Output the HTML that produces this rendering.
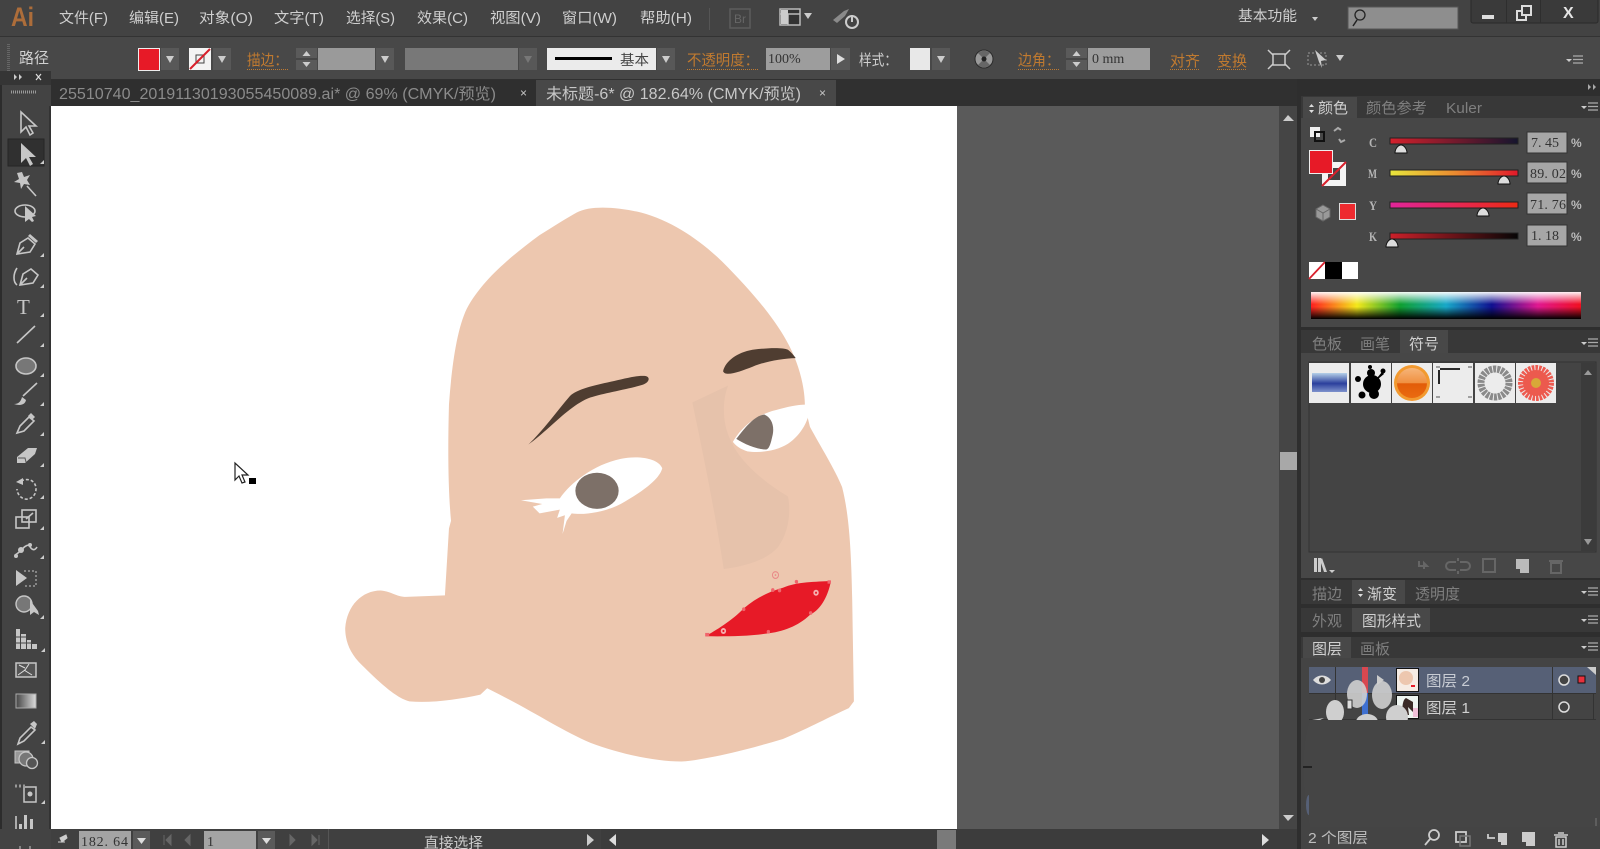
<!DOCTYPE html>
<html lang="zh"><head><meta charset="utf-8"><title>Illustrator</title>
<style>
html,body{margin:0;padding:0;width:1600px;height:849px;overflow:hidden;background:#444}
svg{display:block;filter:blur(.35px)}
text{font-family:"Liberation Sans","Noto Sans CJK SC",sans-serif;fill:#c4c4c4}
.m{font-size:14.5px;fill:#cfcfcf}
.o{font-size:15px;fill:#c07a30}
.t{font-size:15px;fill:#7f7f7f}
.a{font-size:15px;fill:#d0d0d0}
.s{font-family:"Liberation Serif","Noto Sans CJK SC",serif;font-size:14px;fill:#333}
.l{font-family:"Liberation Serif",serif;font-size:13px;font-weight:bold;fill:#b5b5b5}
.ic{fill:none;stroke:#c6c6c6;stroke-width:1.6}
.f{fill:#c6c6c6}
</style></head><body>
<svg xmlns="http://www.w3.org/2000/svg" width="1600" height="849" viewBox="0 0 1600 849">
<defs>
<linearGradient id="gc"><stop offset="0" stop-color="#d5202c"/><stop offset="1" stop-color="#15152e"/></linearGradient>
<linearGradient id="gm"><stop offset="0" stop-color="#e8e63c"/><stop offset=".5" stop-color="#ea8c30"/><stop offset="1" stop-color="#e2182a"/></linearGradient>
<linearGradient id="gy"><stop offset="0" stop-color="#e0259a"/><stop offset="1" stop-color="#ec2a14"/></linearGradient>
<linearGradient id="gk"><stop offset="0" stop-color="#cc202a"/><stop offset="1" stop-color="#060606"/></linearGradient>
<linearGradient id="spec"><stop offset="0" stop-color="#ff2020"/><stop offset=".17" stop-color="#f4e81c"/><stop offset=".33" stop-color="#10a030"/><stop offset=".5" stop-color="#18a8c8"/><stop offset=".67" stop-color="#101090"/><stop offset=".84" stop-color="#e01890"/><stop offset="1" stop-color="#f01020"/></linearGradient>
<linearGradient id="specv" x2="0" y2="1"><stop offset="0" stop-color="#fff" stop-opacity=".95"/><stop offset=".45" stop-color="#fff" stop-opacity="0"/><stop offset=".55" stop-color="#000" stop-opacity="0"/><stop offset="1" stop-color="#000"/></linearGradient>
<linearGradient id="gg"><stop offset="0" stop-color="#444"/><stop offset="1" stop-color="#ddd"/></linearGradient>
<linearGradient id="gb" x2="0" y2="1"><stop offset="0" stop-color="#b5d0e8"/><stop offset=".55" stop-color="#2b3f9c"/><stop offset="1" stop-color="#7e92cc"/></linearGradient>
<linearGradient id="go" x2="0" y2="1"><stop offset="0" stop-color="#f6b57a"/><stop offset=".5" stop-color="#f09040"/><stop offset=".52" stop-color="#e25c08"/><stop offset="1" stop-color="#ea6a10"/></linearGradient>
<g id="dd"><rect x="0" y="0" width="18" height="22" fill="#585858"/><path d="M5 8h8l-4 7z" fill="#ccc"/></g>
<g id="pm"><path d="M0 3h6l-3 3z" fill="#ccc"/><path d="M7 0h10M7 3.500h10M7 7h10" stroke="#aaa" stroke-width="1.300" fill="none"/></g>
<path id="cnr" d="M4 0v-4l-4 4z" fill="#ccc"/>
<g id="spin"><rect width="21" height="22" fill="#5a5a5a"/><path d="M0 11h21" stroke="#333"/><path d="M10.500 3l4 5h-8zM10.500 19l4-5h-8z" fill="#ccc"/></g>
<path id="thumb" d="M-6 4c0-4 3-8 6-8s6 4 6 8z" fill="#ddd" stroke="#111" stroke-width="1"/>
</defs>

<rect width="1600" height="849" fill="#444"/>

<!-- menu bar -->
<rect width="1600" height="36" fill="#434343"/>
<path d="M0 36.500h1600" stroke="#333"/>
<text x="11" y="26" textLength="23" lengthAdjust="spacingAndGlyphs" style="font-size:27px;fill:#ad6d3a;font-weight:bold">Ai</text>
<text class="m" x="59" y="23" textLength="49" lengthAdjust="spacingAndGlyphs">文件(F)</text>
<text class="m" x="129" y="23" textLength="50" lengthAdjust="spacingAndGlyphs">编辑(E)</text>
<text class="m" x="199" y="23" textLength="54" lengthAdjust="spacingAndGlyphs">对象(O)</text>
<text class="m" x="274" y="23" textLength="50" lengthAdjust="spacingAndGlyphs">文字(T)</text>
<text class="m" x="346" y="23" textLength="49" lengthAdjust="spacingAndGlyphs">选择(S)</text>
<text class="m" x="417" y="23" textLength="51" lengthAdjust="spacingAndGlyphs">效果(C)</text>
<text class="m" x="490" y="23" textLength="51" lengthAdjust="spacingAndGlyphs">视图(V)</text>
<text class="m" x="562" y="23" textLength="55" lengthAdjust="spacingAndGlyphs">窗口(W)</text>
<text class="m" x="640" y="23" textLength="52" lengthAdjust="spacingAndGlyphs">帮助(H)</text>
<path d="M709.500 8v22" stroke="#555"/>
<rect x="730" y="9" width="20" height="19" fill="none" stroke="#5c5c5c" stroke-width="1.500"/>
<text x="734" y="23" style="font-size:12px;fill:#666">Br</text>
<rect x="780" y="9" width="20" height="16" fill="#333" stroke="#bbb" stroke-width="1.500"/>
<path d="M780 14h20M788 14v11" stroke="#bbb" stroke-width="1.500"/>
<rect x="781" y="10" width="7" height="14" fill="#ccc"/>
<path d="M804 13h8l-4 6z" fill="#ccc"/>
<path d="M833 20l11-9 5-2-4 7-8 7z" fill="#8a8a8a"/>
<circle cx="852" cy="22" r="6" fill="none" stroke="#ccc" stroke-width="2"/>
<path d="M852 15v7" stroke="#ccc" stroke-width="2"/>
<text class="m" x="1238" y="21" textLength="59" lengthAdjust="spacingAndGlyphs">基本功能</text>
<path d="M1312 17h6l-3 4z" fill="#ccc"/>
<rect x="1348" y="7" width="110" height="22" fill="#8e8e8e" stroke="#555"/>
<circle cx="1360" cy="15" r="5" fill="none" stroke="#222" stroke-width="1.300"/>
<path d="M1357 20l-4 6" stroke="#222" stroke-width="1.500"/>
<rect x="1471" y="-2" width="127" height="25" rx="2" fill="#3a3a3a" stroke="#2a2a2a"/>
<path d="M1506.500 0v23M1540.500 0v23" stroke="#2e2e2e"/>
<rect x="1482" y="15" width="12" height="4" fill="#ddd"/>
<rect x="1517" y="11" width="9" height="9" fill="none" stroke="#ddd" stroke-width="2"/>
<rect x="1522" y="6" width="9" height="9" fill="#3a3a3a" stroke="#ddd" stroke-width="2"/>
<text x="1563" y="18" style="font-size:16px;font-weight:bold;fill:#e4e4e4">X</text>

<!-- control bar -->
<rect y="37" width="1600" height="42" fill="#484848"/>
<path d="M8.500 44v28" stroke="#666" stroke-dasharray="1 1" stroke-width="3"/>
<text class="a" x="19" y="63" textLength="30" lengthAdjust="spacingAndGlyphs">路径</text>
<rect x="138.500" y="48.500" width="21" height="22" fill="#e71a27" stroke="#eee"/>
<use href="#dd" x="161" y="48"/>
<rect x="189" y="48" width="22" height="22" fill="#f4f4f4"/>
<rect x="196" y="55" width="8" height="8" fill="none" stroke="#444"/>
<path d="M190 69l20-20" stroke="#d8202c" stroke-width="2"/>
<use href="#dd" x="213" y="48"/>
<text class="o" x="247" y="65" textLength="41" lengthAdjust="spacingAndGlyphs">描边：</text>
<path d="M247 69.500h41" stroke="#c07a30" stroke-dasharray="1 1"/>
<use href="#spin" x="296" y="48"/>
<rect x="318" y="48" width="57" height="22" fill="#9a9a9a"/>
<use href="#dd" x="376" y="48"/>
<rect x="405" y="48" width="113" height="22" fill="#787878"/>
<rect x="519" y="48" width="18" height="22" fill="#585858"/><path d="M524 56h8l-4 7z" fill="#777"/>
<rect x="547" y="48" width="109" height="22" fill="#ebebeb"/>
<rect x="555" y="57" width="57" height="3" fill="#000"/>
<text class="s" x="620" y="65" textLength="29" lengthAdjust="spacingAndGlyphs" style="font-size:14px;fill:#444">基本</text>
<use href="#dd" x="657" y="48"/>
<text class="o" x="687" y="65" textLength="72" lengthAdjust="spacingAndGlyphs">不透明度：</text>
<path d="M687 69.500h72" stroke="#c07a30" stroke-dasharray="1 1"/>
<rect x="766" y="48" width="64" height="22" fill="#9d9d9d"/>
<text class="s" x="768" y="63">100%</text>
<rect x="831" y="48" width="19" height="22" fill="#585858"/><path d="M837 54l8 5-8 5z" fill="#ddd"/>
<text class="a" x="859" y="65" textLength="38" lengthAdjust="spacingAndGlyphs">样式：</text>
<rect x="910" y="48" width="20" height="22" fill="#e8e8e8"/>
<use href="#dd" x="932" y="48"/>
<circle cx="984" cy="59" r="9" fill="#999" stroke="#2a2a2a"/><path d="M984 59l-6-6a9 9 0 0 1 12 0zM984 59l6 6a9 9 0 0 1-12 0z" fill="#666"/><circle cx="984" cy="59" r="2.500" fill="#222"/>
<text class="o" x="1018" y="65" textLength="42" lengthAdjust="spacingAndGlyphs">边角：</text>
<path d="M1018 69.500h42" stroke="#c07a30" stroke-dasharray="1 1"/>
<use href="#spin" x="1066" y="48"/>
<rect x="1088" y="48" width="62" height="22" fill="#9d9d9d"/>
<text class="s" x="1092" y="63">0 mm</text>
<text class="o" x="1170" y="66" textLength="30" lengthAdjust="spacingAndGlyphs">对齐</text>
<path d="M1170 69.500h30" stroke="#c07a30" stroke-dasharray="1 1"/>
<text class="o" x="1217" y="66" textLength="30" lengthAdjust="spacingAndGlyphs">变换</text>
<path d="M1217 69.500h30" stroke="#c07a30" stroke-dasharray="1 1"/>
<rect x="1273" y="54" width="12" height="11" fill="none" stroke="#ccc" stroke-width="1.500"/>
<path d="M1268 50l5 5M1290 50l-5 5M1268 69l5-5M1290 69l-5-5" stroke="#ccc" stroke-width="1.500"/>
<rect x="1308" y="53" width="18" height="12" fill="none" stroke="#999" stroke-dasharray="2 2"/>
<path d="M1315 50l11 10-5 1 1 7-3-6z" fill="#ccc"/>
<path d="M1336 55h8l-4 6z" fill="#ccc"/>
<use href="#pm" x="1566" y="56"/>

<!-- tab bar -->
<rect y="79" width="1600" height="27" fill="#303030"/>
<rect x="51" y="80" width="485" height="26" fill="#2f2f2f"/>
<rect x="536" y="80" width="300" height="26" fill="#484848"/>
<text x="59" y="99" textLength="437" lengthAdjust="spacingAndGlyphs" style="font-size:15.500px;fill:#8b8b8b">25510740_20191130193055450089.ai* @ 69% (CMYK/预览)</text>
<text x="520" y="97" style="font-size:12px;fill:#c8c8c8">×</text>
<text x="546" y="99" textLength="255" lengthAdjust="spacingAndGlyphs" style="font-size:15.500px;fill:#c8c8c8">未标题-6* @ 182.64% (CMYK/预览)</text>
<text x="819" y="97" style="font-size:12px;fill:#c8c8c8">×</text>

<!-- canvas -->
<rect x="51" y="106" width="1229" height="723" fill="#5a5a5a"/>
<rect x="51" y="106" width="906" height="723" fill="#fff"/>

<g transform="translate(330 190) scale(.338 .376)">
<path fill="#edc7af" d="M730 60C770 40 850 45 920 60C1010 82 1090 130 1160 190C1240 262 1310 335 1350 400C1385 455 1405 520 1405 575L1420 630C1450 680 1495 745 1515 790C1535 860 1542 950 1545 1090L1550 1360L1535 1378C1480 1400 1420 1430 1340 1460C1260 1482 1120 1515 1040 1520C960 1520 860 1500 770 1470C680 1435 600 1385 465 1325L445 1342C380 1355 300 1365 235 1360C190 1350 130 1295 85 1255C55 1225 45 1195 45 1165C50 1105 95 1065 150 1065C185 1068 195 1082 225 1082L340 1078L352 900L358 880C350 800 348 700 352 570C360 470 375 370 405 315C450 240 530 180 620 120C660 98 700 75 730 60Z"/>
<path fill="#e6c2ab" d="M1072 565L1178 520C1160 560 1160 620 1185 665C1210 720 1280 775 1355 815C1365 860 1355 915 1325 950C1290 985 1230 1000 1165 1008C1150 920 1125 790 1072 565Z"/>
<path fill="#fff" d="M1192 670C1220 625 1270 595 1320 585C1360 575 1400 568 1420 572C1420 610 1395 650 1355 675C1320 695 1270 700 1235 695C1215 690 1200 680 1192 670Z"/>
<path fill="#7d7068" d="M1202 662C1225 635 1255 600 1285 597C1305 605 1315 625 1310 650C1305 670 1300 690 1290 690C1260 690 1225 675 1202 662Z"/>
<path fill="#fff" d="M565 825L640 820L680 820C710 780 780 730 860 715C910 706 970 712 983 740C975 770 920 805 860 835C810 858 750 865 715 860L700 880L688 915L695 865L672 872L680 850L620 860L600 842L628 835Z"/>
<ellipse cx="790" cy="800" rx="64" ry="48" fill="#7d7068"/>
<path fill="#4f3d31" d="M587 677C630 640 670 590 710 548C730 530 780 520 830 510C870 502 910 492 935 495C948 498 945 512 925 518C880 530 810 540 770 552C730 565 690 598 650 630C625 650 605 665 587 677Z"/>
<path fill="#4f3d31" d="M1163 482C1170 455 1205 432 1250 425C1290 420 1340 418 1355 425C1365 432 1372 440 1378 447C1340 448 1290 455 1250 470C1215 482 1170 498 1163 482Z"/>
<path fill="#e71a27" d="M1110 1187C1140 1172 1190 1145 1225 1112C1260 1085 1300 1068 1340 1058C1380 1042 1440 1042 1482 1040C1475 1075 1455 1115 1420 1130C1385 1160 1340 1175 1290 1180C1230 1188 1170 1187 1110 1187Z"/>
<g fill="#f0656c">
<rect x="1110" y="1178" width="12" height="9"/><rect x="1472" y="1038" width="10" height="9"/><circle cx="1380" cy="1042" r="5"/><circle cx="1310" cy="1064" r="5"/><circle cx="1330" cy="1065" r="5"/><circle cx="1224" cy="1115" r="5"/><circle cx="1297" cy="1175" r="5"/><circle cx="1422" cy="1125" r="5"/>
</g>
<circle cx="1438" cy="1071" r="8" fill="#f6b0b0"/><circle cx="1438" cy="1071" r="3" fill="#e71a27"/>
<circle cx="1164" cy="1173" r="8" fill="#f6b0b0"/><circle cx="1164" cy="1173" r="3" fill="#e71a27"/>
<circle cx="1318" cy="1024" r="9" fill="none" stroke="#e98a88" stroke-width="3"/><circle cx="1318" cy="1024" r="2.500" fill="#e98a88"/>
</g>

<!-- pointer -->
<path d="M235 463v17l4-4 3 7 3-1-3-7h6z" fill="#fff" stroke="#222" stroke-width="1.200"/>
<rect x="249" y="478" width="7" height="6" fill="#000"/>

<!-- v scroll -->
<rect x="1279" y="106" width="21" height="723" fill="#454545"/>
<path d="M1283 121l5-6 6 6z" fill="#ccc"/>
<path d="M1283 815l5 6 6-6z" fill="#ccc"/>
<rect x="1280" y="452" width="18" height="18" fill="#a8a8a8"/>

<!-- toolbar -->
<rect y="79" width="51" height="770" fill="#434343"/>
<rect x="0" y="84" width="2" height="765" fill="#2c2c2c"/>
<rect x="49" y="106" width="2" height="723" fill="#333"/>
<rect y="71" width="51" height="14" fill="#353535"/>
<path d="M14 74l3 3-3 3zM19 74l3 3-3 3z" fill="#ccc"/>
<path d="M36 74l5 6M41 74l-5 6" stroke="#ddd" stroke-width="1.200"/>
<path d="M11 92h26" stroke="#9a9a9a" stroke-width="3" stroke-dasharray="1 1"/>
<rect x="8" y="139" width="36" height="27" fill="#303030" stroke="#262626"/>
<path class="ic" d="M21 112v20l5-5 4 8 3-2-4-7h7z" stroke-width="2"/>
<path class="f" d="M21 143v20l5-5 4 8 3-2-4-7h7z"/>
<use href="#cnr" x="40" y="164"/>
<path class="f" d="M22 172l2 5 6-2-3 5 3 5-6-1-3 5-1-6-6-1 5-3-2-6z"/>
<path class="ic" d="M27 186l9 10" stroke-width="2"/>
<ellipse class="ic" cx="25" cy="211" rx="10" ry="6" stroke-width="2"/>
<path class="f" d="M25 206v16l4-3 3 3 2-1-2-4 4-1z"/>
<path class="ic" d="M17 254l3-11 8-5 7 6-5 8z M17 254l7-7"/>
<path class="f" d="M28 236l2-2 8 7-2 2z"/><use href="#cnr" x="40" y="257"/>
<path class="ic" d="M20 285l3-11 8-5 7 6-5 8zM20 285l7-7M17 268c-4 6-4 14 0 17"/>
<use href="#cnr" x="40" y="288"/>
<text x="17" y="314" style="font-family:'Liberation Serif',serif;font-size:21px;fill:#c6c6c6">T</text>
<use href="#cnr" x="40" y="317"/>
<path class="ic" d="M17 343l18-17" stroke-width="2"/><use href="#cnr" x="40" y="347"/>
<ellipse cx="26" cy="366" rx="10" ry="8" fill="#777" stroke="#c6c6c6" stroke-width="1.600"/><use href="#cnr" x="40" y="377"/>
<path class="ic" d="M23 396l14-13" stroke-width="2.500"/><path class="f" d="M14 404c5 0 7-3 8-7l4 3c-1 5-6 6-12 4z"/><use href="#cnr" x="40" y="406"/>
<path class="ic" d="M17 433l3-7 9-9 5 4-10 10z"/><path class="f" d="M28 416l3-3 4 4-3 3z"/><use href="#cnr" x="40" y="436"/>
<path class="f" d="M17 457l11-9h9l-2 6-10 9h-8z"/><path d="M18 458h7l1 4" fill="none" stroke="#555"/><use href="#cnr" x="40" y="467"/>
<path class="ic" d="M21 481c9-4 15 1 15 8s-6 11-11 10-8-6-8-10" stroke-dasharray="3 2"/><path class="f" d="M16 482l7-4v7z"/><use href="#cnr" x="40" y="499"/>
<rect class="ic" x="16" y="517" width="13" height="11"/><rect class="ic" x="22" y="510" width="14" height="12"/><path class="ic" d="M26 519l7-6"/><use href="#cnr" x="40" y="530"/>
<path class="ic" d="M15 555c6-3 9-10 14-10 2 4 5 7 8 2" stroke-width="2.200"/><circle cx="21" cy="550" r="3" class="f"/><circle cx="30" cy="545" r="2" class="f"/><circle cx="16" cy="556" r="2" class="f"/><use href="#cnr" x="40" y="559"/>
<path class="f" d="M16 570l11 8-11 8z"/><path d="M24 571h12v15h-12" fill="none" stroke="#c6c6c6" stroke-dasharray="2 2"/>
<circle cx="24" cy="604" r="8" fill="#777" stroke="#c6c6c6" stroke-width="1.400"/><path d="M30 600v15l4-3 5 3-1-4z" class="f"/><use href="#cnr" x="40" y="619"/>
<path class="f" d="M16 629h4v20h-4zM21 634h5v15h-5zM27 640h4v9h-4zM32 644h5v5h-5z"/><path d="M15 643h24M15 637h12" stroke="#444"/><use href="#cnr" x="41" y="652"/>
<rect x="16" y="663" width="20" height="14" fill="#555" stroke="#c6c6c6" stroke-width="1.500"/><path d="M18 675l7-5 4-6M24 670l8 5M25 668l-6-3" fill="none" stroke="#ddd"/>
<rect x="16" y="694" width="20" height="14" fill="url(#gg)" stroke="#aaa"/>
<path class="ic" d="M18 744l2-6 11-11 4 3-11 11z"/><path class="f" d="M30 724l4-3 3 3-2 5z"/><use href="#cnr" x="41" y="744"/>
<rect x="15" y="751" width="14" height="12" fill="#999" stroke="#c6c6c6"/><circle cx="26" cy="759" r="7" fill="#777" stroke="#c6c6c6" stroke-width="1.300"/><circle cx="32" cy="763" r="5.500" fill="#555" stroke="#c6c6c6" stroke-width="1.300"/>
<rect x="24" y="787" width="12" height="15" fill="none" stroke="#c6c6c6" stroke-width="1.500"/><circle cx="30" cy="794" r="2.500" class="f"/><path d="M15 786h12" stroke="#999" stroke-width="3" stroke-dasharray="2 2"/><use href="#cnr" x="41" y="804"/>
<path class="ic" d="M16 816v17h20" stroke-width="1"/><path class="f" d="M19 824h3v8h-3zM24 815h3v17h-3zM30 819h3v13h-3z"/><use href="#cnr" x="41" y="836"/>

<!-- status bar -->
<rect x="0" y="829" width="1300" height="20" fill="#404040"/>
<rect x="0" y="829" width="51" height="20" fill="#434343"/>
<path d="M20 846v3M30 846v3" stroke="#c6c6c6"/>
<path d="M58 842h7M60 838l6-3 1 3-5 4z" stroke="#ccc" fill="#ccc"/>
<rect x="79" y="831" width="52" height="18" fill="#a4a4a4"/>
<text class="s" x="81" y="846" textLength="47">182. 64</text>
<rect x="133" y="831" width="17" height="18" fill="#5a5a5a"/><path d="M137 838h9l-4.500 6z" fill="#ddd"/>
<path d="M164 835v10M171 835l-5 5 5 5zM190 835l-5 5 5 5z" fill="#666" stroke="#666"/>
<rect x="204" y="831" width="52" height="18" fill="#a4a4a4"/>
<text class="s" x="207" y="846">1</text>
<rect x="258" y="831" width="17" height="18" fill="#5a5a5a"/><path d="M262 838h9l-4.500 6z" fill="#ddd"/>
<path d="M290 835l5 5-5 5zM312 835l5 5-5 5zM319 835v10" fill="#666" stroke="#666"/>
<path d="M328.500 829v20" stroke="#555"/>
<text x="424" y="848" textLength="59" lengthAdjust="spacingAndGlyphs" style="font-size:14.500px;fill:#ccc">直接选择</text>
<path d="M587 834l7 6-7 6z" fill="#ccc"/>
<rect x="601" y="829" width="699" height="20" fill="#3c3c3c"/>
<path d="M616 834l-7 6 7 6z" fill="#ddd"/>
<path d="M1262 834l7 6-7 6z" fill="#ddd"/>
<rect x="937" y="830" width="19" height="19" fill="#7a7a7a"/>

<!-- right dock -->
<rect x="1297" y="79" width="303" height="770" fill="#2e2e2e"/>
<path d="M1588 84l3 3-3 3zM1593 84l3 3-3 3z" fill="#aaa"/>
<!-- color panel -->
<rect x="1301" y="96" width="299" height="22" fill="#383838"/>
<rect x="1303" y="97" width="54" height="21" fill="#484848"/>
<rect x="1301" y="118" width="299" height="209" fill="#474747"/>
<path d="M1309 107l2.500-3 2.500 3zM1309 110l2.500 3 2.500-3z" fill="#ddd"/>
<text class="a" x="1318" y="113" textLength="30" lengthAdjust="spacingAndGlyphs">颜色</text>
<text class="t" x="1366" y="113" textLength="61" lengthAdjust="spacingAndGlyphs">颜色参考</text>
<text x="1446" y="113" textLength="36" lengthAdjust="spacingAndGlyphs" style="font-size:15px;fill:#7f7f7f">Kuler</text>
<use href="#pm" x="1581" y="103"/>
<rect x="1310" y="127" width="10" height="10" fill="#eee"/><rect x="1315" y="132" width="9" height="9" fill="none" stroke="#111" stroke-width="2"/>
<path d="M1334 131l4-3 3 2M1345 140l-4 2-2-3" fill="none" stroke="#aaa" stroke-width="2"/>
<rect x="1322" y="162" width="24" height="24" fill="#f4f4f4"/><rect x="1328" y="168" width="12" height="12" fill="#444"/>
<path d="M1322 186l24-24" stroke="#d8202c" stroke-width="2"/>
<rect x="1309.500" y="150.500" width="23" height="23" fill="#e71a27" stroke="#eee"/>
<path d="M1323 205l7 4v8l-7 4-7-4v-8z" fill="#999" stroke="#666"/><path d="M1316 209l7 4 7-4M1323 213v8" fill="none" stroke="#666"/>
<rect x="1339.500" y="203.500" width="16" height="16" fill="#ee2a2f" stroke="#ddd"/>
<text class="l" x="1369" y="147" textLength="8" lengthAdjust="spacingAndGlyphs">C</text><text class="l" x="1368" y="178" textLength="9" lengthAdjust="spacingAndGlyphs">M</text><text class="l" x="1369" y="210" textLength="8" lengthAdjust="spacingAndGlyphs">Y</text><text class="l" x="1369" y="241" textLength="8" lengthAdjust="spacingAndGlyphs">K</text>
<rect x="1390" y="138" width="128" height="6" fill="url(#gc)" stroke="#222"/>
<rect x="1390" y="170" width="128" height="6" fill="url(#gm)" stroke="#222"/>
<rect x="1390" y="202" width="128" height="6" fill="url(#gy)" stroke="#222"/>
<rect x="1390" y="233" width="128" height="6" fill="url(#gk)" stroke="#222"/>
<use href="#thumb" x="1401" y="149"/><use href="#thumb" x="1504" y="180"/><use href="#thumb" x="1483" y="212"/><use href="#thumb" x="1392" y="243"/>
<rect x="1527" y="132" width="40" height="21" fill="#a6a6a6" stroke="#333"/>
<rect x="1527" y="162" width="40" height="21" fill="#a6a6a6" stroke="#333"/>
<rect x="1527" y="193" width="40" height="21" fill="#a6a6a6" stroke="#333"/>
<rect x="1527" y="225" width="40" height="21" fill="#a6a6a6" stroke="#333"/>
<text class="s" x="1531" y="147">7. 45</text><text class="s" x="1530" y="178" textLength="36">89. 02</text><text class="s" x="1530" y="209" textLength="36">71. 76</text><text class="s" x="1531" y="240">1. 18</text>
<text x="1571" y="147" style="font-size:12px;font-weight:bold;fill:#bbb">%</text><text x="1571" y="178" style="font-size:12px;font-weight:bold;fill:#bbb">%</text><text x="1571" y="209" style="font-size:12px;font-weight:bold;fill:#bbb">%</text><text x="1571" y="241" style="font-size:12px;font-weight:bold;fill:#bbb">%</text>
<rect x="1309" y="262" width="16" height="17" fill="#fff"/><path d="M1309 279l16-17" stroke="#d8202c" stroke-width="1.800"/>
<rect x="1325" y="262" width="17" height="17" fill="#000"/><rect x="1342" y="262" width="16" height="17" fill="#fff"/>
<rect x="1311" y="292" width="270" height="27" fill="url(#spec)"/><rect x="1311" y="292" width="270" height="27" fill="url(#specv)"/>
<!-- symbols panel -->
<rect x="1301" y="330" width="299" height="23" fill="#383838"/>
<rect x="1400" y="330" width="48" height="23" fill="#484848"/>
<rect x="1301" y="353" width="299" height="225" fill="#474747"/>
<text class="t" x="1312" y="349" textLength="30" lengthAdjust="spacingAndGlyphs">色板</text>
<text class="t" x="1360" y="349" textLength="30" lengthAdjust="spacingAndGlyphs">画笔</text>
<text class="a" x="1409" y="349" textLength="30" lengthAdjust="spacingAndGlyphs">符号</text>
<use href="#pm" x="1581" y="339"/>
<rect x="1309" y="362" width="287" height="190" fill="#444" stroke="#333"/>
<rect x="1581" y="363" width="15" height="188" fill="#3b3b3b"/>
<path d="M1584 375l4-5 4 5zM1584 539l4 6 4-6z" fill="#999"/>
<g fill="#ececec"><rect x="1309" y="363" width="40" height="40"/><rect x="1351" y="363" width="40" height="40"/><rect x="1392" y="363" width="40" height="40"/><rect x="1433" y="363" width="40" height="40"/><rect x="1475" y="363" width="40" height="40"/><rect x="1516" y="363" width="40" height="40"/></g>
<rect x="1312" y="373" width="35" height="19" fill="url(#gb)"/>
<g fill="#000"><circle cx="1372" cy="384" r="9"/><circle cx="1371" cy="373" r="4"/><circle cx="1358" cy="379" r="3"/><circle cx="1383" cy="371" r="2.500"/><circle cx="1362" cy="395" r="3.500"/><circle cx="1374" cy="394" r="5"/><circle cx="1370" cy="367" r="2"/><path d="M1372 384l10-12 2 2z"/></g>
<circle cx="1412" cy="383" r="18" fill="#f29a30"/><circle cx="1412" cy="383" r="15" fill="url(#go)"/>
<path d="M1440 369h20M1439 370v14" stroke="#111" stroke-width="1.800"/><path d="M1436 367h4M1468 367h4M1436 397h4M1468 397h4" stroke="#555"/>
<circle cx="1495" cy="383" r="14" fill="none" stroke="#8a8a8a" stroke-width="7" stroke-dasharray="3 1"/>
<circle cx="1536" cy="383" r="15" fill="none" stroke="#ee5a50" stroke-width="6" stroke-dasharray="2.500 1"/><circle cx="1536" cy="383" r="13" fill="#ec5a4e"/><circle cx="1536" cy="383" r="5" fill="#d8a838"/>
<path d="M1314 558h3v14h-3zM1318 558h3v14h-3zM1322 558l5 14h-3l-4-12z" fill="#ccc"/><path d="M1329 570h6l-3 3z" fill="#ccc"/>
<g stroke="#666" fill="none" stroke-width="2">
<path d="M1419 561v5h8l-3-3v6"/>
<path d="M1456 562h-6a3 3 0 0 0 0 8h6M1460 562h6a3 3 0 0 1 0 8h-6M1458 558v3M1458 571v3"/>
<rect x="1483" y="559" width="12" height="13"/>
</g>
<path d="M1516 559h13v14h-9v-4h-4z" fill="#bbb"/>
<path d="M1549 561h14M1551 563h10v10h-10z" fill="none" stroke="#666" stroke-width="2"/>
<!-- gradient tabs -->
<rect x="1301" y="580" width="299" height="24" fill="#383838"/>
<rect x="1352" y="580" width="53" height="24" fill="#484848"/>
<text class="t" x="1312" y="599" textLength="30" lengthAdjust="spacingAndGlyphs">描边</text>
<path d="M1358 591l2.500-3 2.500 3zM1358 594l2.500 3 2.500-3z" fill="#ddd"/>
<text class="a" x="1367" y="599" textLength="30" lengthAdjust="spacingAndGlyphs">渐变</text>
<text class="t" x="1415" y="599" textLength="45" lengthAdjust="spacingAndGlyphs">透明度</text>
<use href="#pm" x="1581" y="588"/>
<rect x="1301" y="608" width="299" height="24" fill="#383838"/>
<rect x="1352" y="608" width="78" height="24" fill="#484848"/>
<text class="t" x="1312" y="626" textLength="30" lengthAdjust="spacingAndGlyphs">外观</text>
<text class="a" x="1362" y="626" textLength="59" lengthAdjust="spacingAndGlyphs">图形样式</text>
<use href="#pm" x="1581" y="616"/>
<!-- layers -->
<rect x="1301" y="637" width="299" height="21" fill="#383838"/>
<rect x="1303" y="637" width="48" height="21" fill="#484848"/>
<rect x="1301" y="658" width="299" height="191" fill="#444"/>
<text class="a" x="1312" y="654" textLength="30" lengthAdjust="spacingAndGlyphs">图层</text>
<text class="t" x="1360" y="654" textLength="30" lengthAdjust="spacingAndGlyphs">画板</text>
<use href="#pm" x="1581" y="643"/>
<rect x="1309" y="667" width="287" height="26" fill="#566076"/>
<rect x="1309" y="693" width="287" height="27" fill="#444"/>
<path d="M1309 693.500h287M1309 719.500h287M1335.500 667v53M1552.500 667v53" stroke="#333"/>
<path d="M1313 680c5-6 13-6 18 0-5 6-13 6-18 0z" fill="#ddd"/><circle cx="1322" cy="680" r="3" fill="#444"/>
<rect x="1362" y="667" width="6" height="26" fill="#d84850"/>
<rect x="1362" y="693" width="6" height="27" fill="#3f70d0"/>
<path d="M1377 675l7 5-7 5z" fill="#ccc"/>
<rect x="1396.500" y="668.500" width="22" height="23" fill="#f6ece4" stroke="#111"/>
<circle cx="1406" cy="678" r="7" fill="#edc7af"/><rect x="1411" y="685" width="4" height="2" fill="#e71a27"/>
<rect x="1396.500" y="695.500" width="22" height="23" fill="#eef4f0" stroke="#111"/>
<path d="M1406 698c-4 2-4 12-3 17h6l-1-8 5 5v-10z" fill="#3a2a26"/><rect x="1413" y="708" width="5" height="9" fill="#f0c0d8"/>
<text class="a" x="1426" y="686" textLength="44" lengthAdjust="spacingAndGlyphs" style="fill:#c8ccd4">图层 2</text>
<text class="a" x="1426" y="713" textLength="44" lengthAdjust="spacingAndGlyphs">图层 1</text>
<circle cx="1564" cy="680" r="5" fill="#444" stroke="#ddd" stroke-width="1.500"/>
<rect x="1578" y="676" width="7" height="7" fill="#e8303c" stroke="#111"/>
<path d="M1596 667v8l-9-8z" fill="#ccc"/>
<circle cx="1564" cy="707" r="5" fill="#444" stroke="#ddd" stroke-width="1.500"/>
<path d="M1593.500 693v27" stroke="#333"/>
<g fill="#cfcfcf">
<ellipse cx="1357" cy="694" rx="10" ry="14" opacity=".9"/><ellipse cx="1382" cy="695" rx="10" ry="14" opacity=".9"/><ellipse cx="1335" cy="712" rx="9" ry="12"/><ellipse cx="1397" cy="717" rx="11" ry="12"/><ellipse cx="1367" cy="722" rx="11" ry="8"/>
</g>
<rect x="1347" y="700" width="5" height="9" fill="#ddd" stroke="#333"/>
<path d="M1312 720l12-2-12 6z" fill="#ccc"/>
<path d="M1310 720H1600V827H1310C1302 790 1300 750 1310 720Z" fill="#454545"/>
<path d="M1303 767h9" stroke="#222" stroke-width="2"/>
<path d="M1309 815a3 10 0 0 1 0-20z" fill="#566076"/>
<path d="M1596 818v8" stroke="#777"/>
<text x="1308" y="843" textLength="60" lengthAdjust="spacingAndGlyphs" style="font-size:14.500px;fill:#bdbdbd">2 个图层</text>
<circle cx="1434" cy="835" r="5" fill="none" stroke="#ccc" stroke-width="1.800"/><path d="M1430 839l-5 6" stroke="#ccc" stroke-width="1.800"/>
<rect x="1456" y="832" width="10" height="10" fill="none" stroke="#ccc" stroke-width="1.800"/><rect x="1460" y="836" width="10" height="10" fill="none" stroke="#777" stroke-width="1.500"/>
<path d="M1488 834v4h7" fill="none" stroke="#ccc" stroke-width="1.800"/><path d="M1498 833h9v12h-6v-3h-3z" fill="#ccc"/>
<path d="M1522 832h13v14h-9v-4h-4z" fill="#ccc"/>
<path d="M1554 835h14M1558 833h6M1556 837h10v10h-10zM1559 839v6M1563 839v6" fill="none" stroke="#ccc" stroke-width="1.500"/>
</svg>
</body></html>
